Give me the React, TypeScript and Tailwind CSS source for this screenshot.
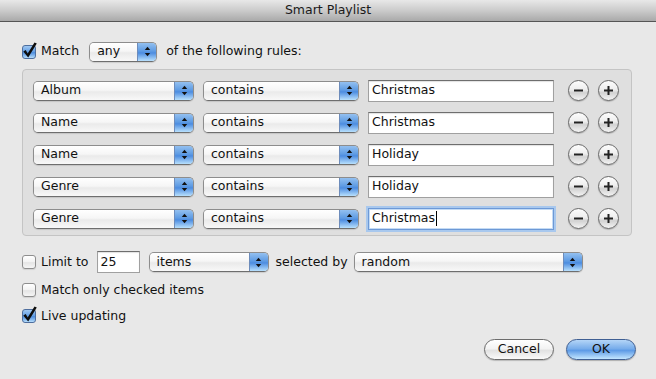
import React from 'react';

const rules = [
  { id: 1, field: "Album", op: "contains", value: "Christmas" },
  { id: 2, field: "Name", op: "contains", value: "Christmas" },
  { id: 3, field: "Name", op: "contains", value: "Holiday" },
  { id: 4, field: "Genre", op: "contains", value: "Holiday" },
  { id: 5, field: "Genre", op: "contains", value: "Christmas", focused: true },
];

const Arrows = () => (
  <svg width="7" height="11" viewBox="0 0 7 11">
    <path d="M3.5 0.8 L6.2 4 H0.8 Z" fill="#111" />
    <path d="M0.8 7 H6.2 L3.5 10.2 Z" fill="#111" />
  </svg>
);

const Popup = ({ label, className }: { label: string; className: string }) => (
  <div className={`flex h-[20px] shrink-0 overflow-hidden rounded-[5px] border border-[#8d8d8d] border-b-[#6e6e6e] shadow-[0_1px_1px_rgba(0,0,0,0.12)] ${className}`}>
    <div className="flex flex-1 items-center bg-[linear-gradient(#ffffff,#f6f6f6_45%,#eaeaea_55%,#f8f8f8)] pl-[7px] text-[12.5px] leading-none text-[#111]">
      {label}
    </div>
    <div className="flex w-[19px] items-center justify-center border-l border-[#6d8cbb] bg-[linear-gradient(#93c0f0,#5e9be3_45%,#4c8ce0_55%,#b8e0fd)]">
      <Arrows />
    </div>
  </div>
);

const Checkbox = ({ checked }: { checked?: boolean }) => (
  <div className="relative h-[14px] w-[14px] shrink-0">
    {checked ? (
      <div className="h-full w-full rounded-[3px] border border-[#4e6e9e] bg-[linear-gradient(#a0c8f2,#619de4_50%,#4d8edf_55%,#b6ddfc)]" />
    ) : (
      <div className="h-full w-full rounded-[3px] border border-[#8e8e8e] bg-[linear-gradient(#ffffff,#f2f2f2_50%,#e4e4e4_55%,#f5f5f5)] shadow-[0_1px_1px_rgba(0,0,0,0.1)]" />
    )}
    {checked && (
      <svg className="absolute left-0 top-[-3px]" width="16" height="17" viewBox="0 0 16 17">
        <path d="M1.3 9.4 L3.7 8.1 L5.7 11.6 L12.5 0.4 L14.8 1.6 L6.2 15.6 Z" fill="#0d0d0d" />
      </svg>
    )}
  </div>
);

const RoundButton = ({ plus }: { plus?: boolean }) => (
  <div className="flex h-[21px] w-[21px] shrink-0 items-center justify-center rounded-full border border-[#6a6a6a] bg-[linear-gradient(#fdfdfd,#eeeeee_45%,#d2d2d2_62%,#f4f4f4)] shadow-[0_1px_1px_rgba(0,0,0,0.2)]">
    <svg width="11" height="11" viewBox="0 0 11 11">
      <path d={plus ? "M1 5.5 H10 M5.5 1 V10" : "M1 5.5 H10"} stroke="#222" strokeWidth="2" />
    </svg>
  </div>
);

const TextField = ({ value, focused, className }: { value: string; focused?: boolean; className: string }) => (
  <div
    className={`flex h-[22px] shrink-0 items-center bg-white pl-[3px] text-[12.5px] leading-none text-[#111] ${
      focused
        ? "border border-[#6d99d6] shadow-[0_0_0_2px_#a8c8ee,inset_0_0_0_1px_#c4dbf4]"
        : "border border-[#a0a0a0] border-t-[#6e6e6e] shadow-[inset_0_1px_1px_rgba(0,0,0,0.12)]"
    } ${className}`}
  >
    {value}
    {focused && <span className="ml-px h-[15px] w-px bg-black" />}
  </div>
);

const App = () => {
  return (
    <div className="h-[379px] w-[656px] overflow-hidden bg-[#e8e8e8] font-['DejaVu_Sans',sans-serif] text-[12.5px] text-[#111]">
      {/* Title bar */}
      <div className="flex h-[22px] items-center justify-center border-b border-[#555555] bg-[linear-gradient(#e8e8e8,#cbcbcb_50%,#a9a9a9)] text-[12.5px] text-[#1a1a1a]">
        Smart Playlist
      </div>

      <div className="pl-[22px] pr-[20px] pt-[19px]">
        {/* Match row */}
        <div className="flex h-[21px] items-center">
          <Checkbox checked />
          <span className="ml-[5px]">Match</span>
          <Popup label="any" className="ml-[10px] w-[68px]" />
          <span className="ml-[9px]">of the following rules:</span>
        </div>

        {/* Rules */}
        <div className="mt-[7px] flex h-[167px] w-[610px] flex-col gap-[11px] rounded-[4px] border border-[#c4c4c4] bg-[#dfdfdf] pl-[10px] pt-[10px]">
          {rules.map((rule) => (
            <div key={rule.id} className="flex h-[21px] items-center">
              <Popup label={rule.field} className="w-[161px]" />
              <Popup label={rule.op} className="ml-[9px] w-[156px]" />
              <TextField value={rule.value} focused={rule.focused} className="ml-[9px] w-[186px]" />
              <div className="ml-[14px] flex gap-[9px]">
                <RoundButton />
                <RoundButton plus />
              </div>
            </div>
          ))}
        </div>

        {/* Limit row */}
        <div className="mt-[15px] flex h-[22px] items-center">
          <Checkbox />
          <span className="ml-[5px]">Limit to</span>
          <TextField value="25" className="ml-[8px] w-[43px]" />
          <Popup label="items" className="ml-[9px] w-[120px]" />
          <span className="ml-[7px]">selected by</span>
          <Popup label="random" className="ml-[6px] w-[229px]" />
        </div>

        <div className="mt-[9px] flex h-[16px] items-center">
          <Checkbox />
          <span className="ml-[5px]">Match only checked items</span>
        </div>

        <div className="mt-[10px] flex h-[16px] items-center">
          <Checkbox checked />
          <span className="ml-[5px]">Live updating</span>
        </div>

        {/* Buttons */}
        <div className="mt-[15px] flex justify-end gap-[12px]">
          <div className="flex h-[21px] w-[70px] items-center justify-center rounded-full border border-[#6c6c6c] bg-[linear-gradient(#ffffff,#f3f3f3_45%,#e2e2e2_55%,#fafafa)] shadow-[0_1px_1px_rgba(0,0,0,0.2)]">
            Cancel
          </div>
          <div className="flex h-[21px] w-[70px] items-center justify-center rounded-full border border-[#3f5f93] bg-[linear-gradient(#b4d5f7,#78adeb_45%,#5e9be6_55%,#c3e6ff)] shadow-[0_1px_1px_rgba(0,0,0,0.25)]">
            OK
          </div>
        </div>
      </div>
    </div>
  );
};

export default App;
